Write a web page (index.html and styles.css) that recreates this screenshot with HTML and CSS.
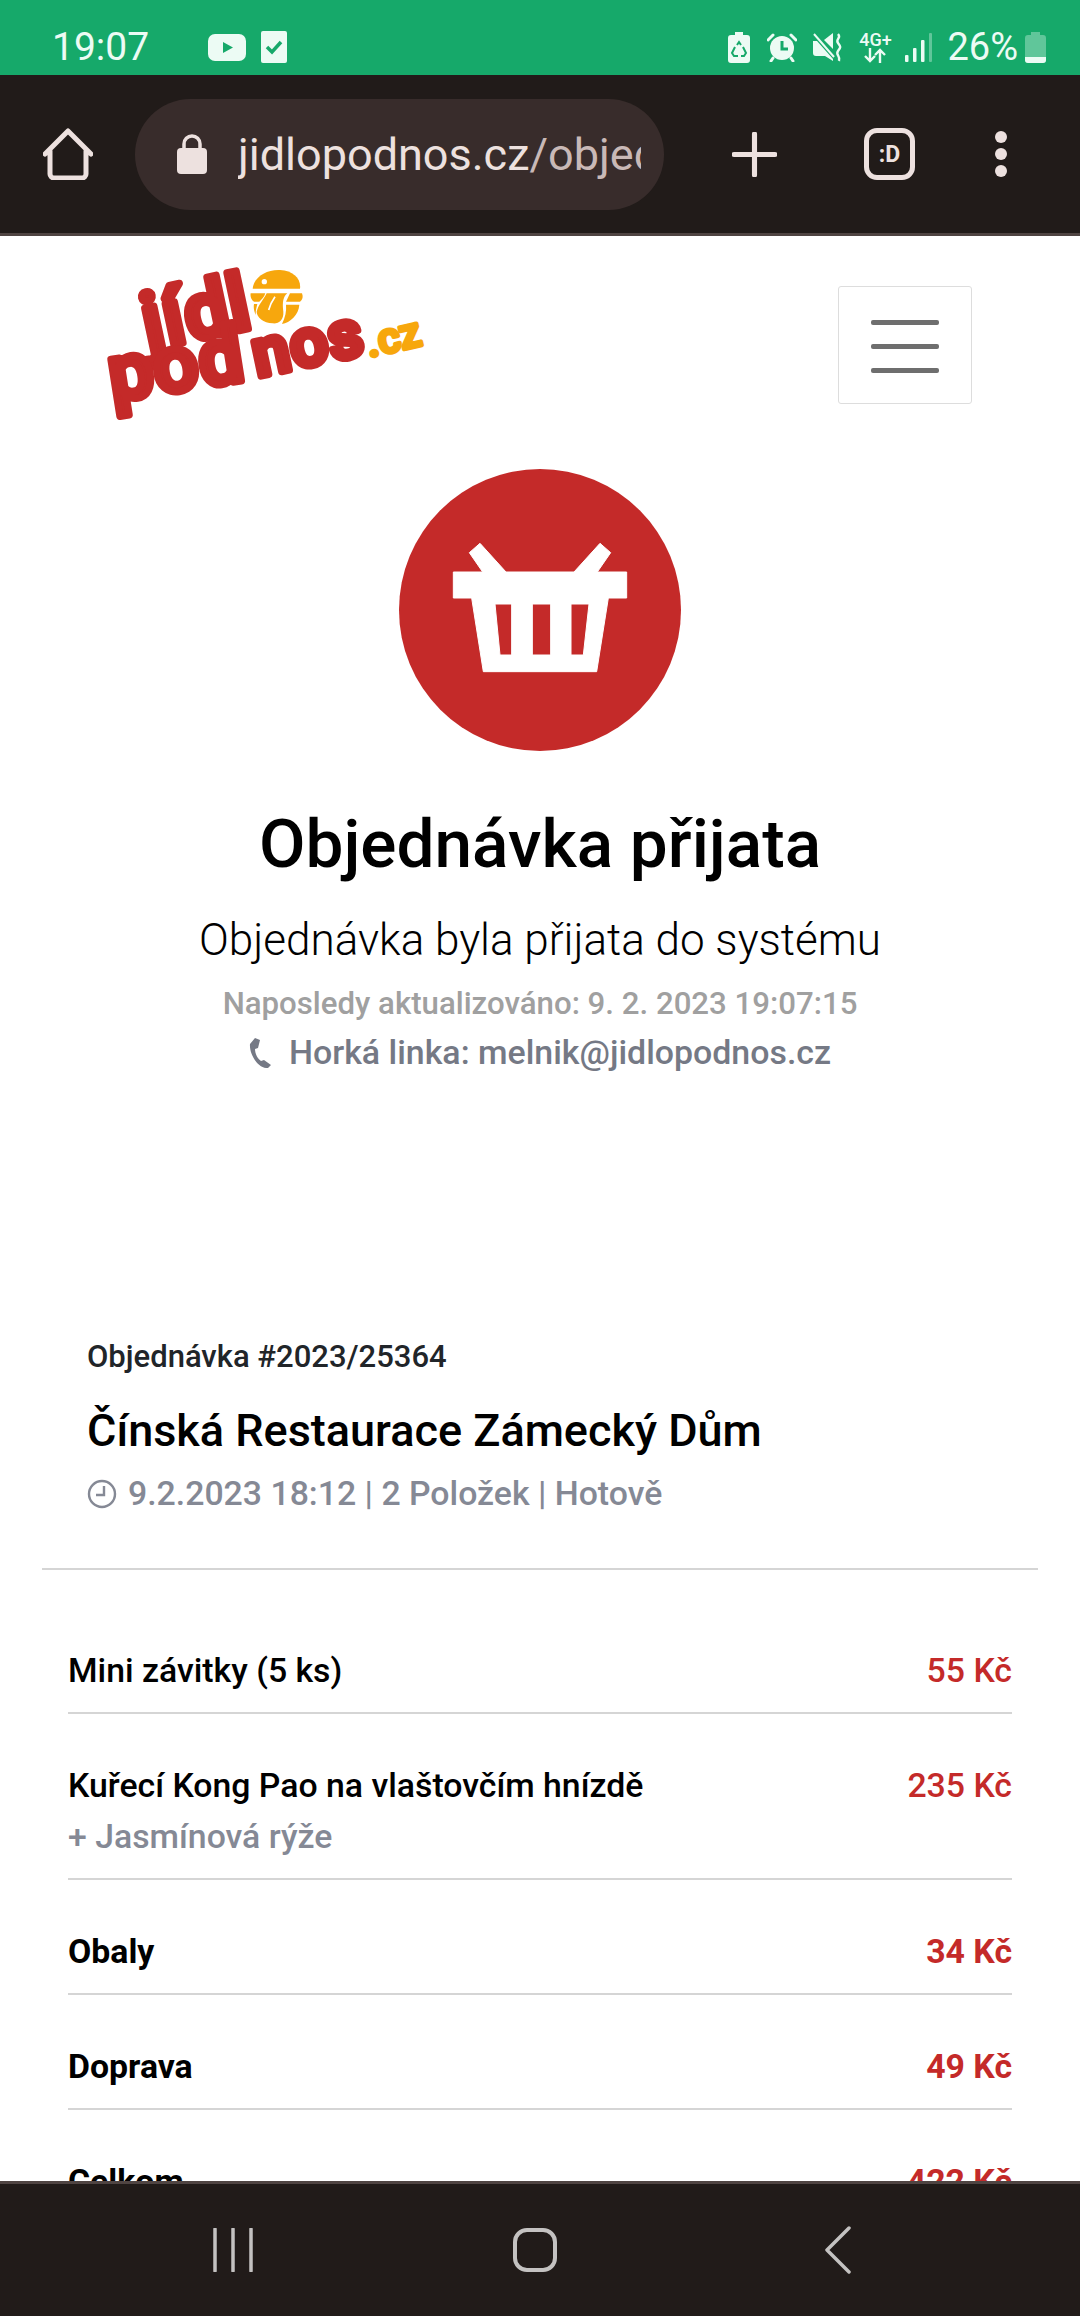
FILE: index.html
```html
<!DOCTYPE html>
<html lang="cs">
<head>
    <meta charset="UTF-8">
    <meta name="viewport" content="width=device-width, initial-scale=1.0">
    <title>Objednávka přijata</title>
    <link rel="stylesheet" href="styles.css">
</head>
<body>
<div class="phone">
    <div class="status-bar">
        <span class="clock">19:07</span>
        <svg class="ic-yt" viewBox="0 0 38 27"><rect width="38" height="27" rx="7" fill="#ecfbf4"/><path d="M15 8v11l10-5.500z" fill="#16a96a"/></svg>
        <svg class="ic-task" viewBox="0 0 26 32"><rect width="26" height="32" rx="2" fill="#ecfbf4"/><path d="M6 16l5 5 9-10" fill="none" stroke="#16a96a" stroke-width="3.500"/></svg>
        <span class="status-space"></span>
        <svg class="ic-recycle" viewBox="0 0 22 31"><path d="M7 0h8v3h4a3 3 0 0 1 3 3v22a3 3 0 0 1-3 3H3a3 3 0 0 1-3-3V6a3 3 0 0 1 3-3h4z" fill="#ecfbf4"/><path d="M9 13l2-3 2 3M7 15l-3 6 2 3h4M15 15l3 6-2 3h-3" fill="none" stroke="#16a96a" stroke-width="2"/></svg>
        <svg class="ic-alarm" viewBox="0 0 30 29"><path d="M1 7l5-5M29 7l-5-5" stroke="#ecfbf4" stroke-width="3" stroke-linecap="round"/><path d="M6 25l-2 3M24 25l2 3" stroke="#ecfbf4" stroke-width="3" stroke-linecap="round"/><circle cx="15" cy="15" r="12" fill="#ecfbf4"/><path d="M15 8v8h6" fill="none" stroke="#16a96a" stroke-width="3"/></svg>
        <svg class="ic-mute" viewBox="0 0 30 29"><path d="M0 8h4l16 18v2l-8-5H3a3 3 0 0 1-3-3z" fill="#ecfbf4"/><path d="M11 7l9-7v16z" fill="#ecfbf4"/><path d="M1 1l20 23" stroke="#ecfbf4" stroke-width="2"/><path d="M25 1c4 4-3 5 0 9s3 4 0 8 3 5 1 10" fill="none" stroke="#ecfbf4" stroke-width="2.400"/></svg>
        <span class="ic-net"><span class="net-text">4G+</span><svg viewBox="0 0 24 15"><path d="M7 0v13M2 8l5 5 5-5M17 15V2M12 7l5-5 5 5" fill="none" stroke="#ecfbf4" stroke-width="2.400"/></svg></span>
        <svg class="ic-signal" viewBox="0 0 27 29"><rect x="0" y="22" width="3.500" height="7" rx="1" fill="#ecfbf4"/><rect x="8" y="15" width="3.500" height="14" rx="1" fill="#ecfbf4"/><rect x="16" y="7" width="3.500" height="22" rx="1" fill="#ecfbf4"/><rect x="24" y="0" width="3" height="29" rx="1" fill="#ecfbf4" opacity=".35"/></svg>
        <span class="battery-text">26%</span>
        <svg class="ic-batt" viewBox="0 0 21 31"><path d="M6 0h9v3h3a3 3 0 0 1 3 3v22a3 3 0 0 1-3 3H3a3 3 0 0 1-3-3V6a3 3 0 0 1 3-3h3z" fill="#ecfbf4" opacity=".35"/><path d="M0 25h21v3a3 3 0 0 1-3 3H3a3 3 0 0 1-3-3z" fill="#ecfbf4"/></svg>
    </div>

    <div class="toolbar">
        <svg class="ic-home" viewBox="0 0 50 52"><path d="M2 26L25 3l23 23M7 23v23a4 4 0 0 0 4 4h28a4 4 0 0 0 4-4V23" fill="none" stroke="#ede1df" stroke-width="5" stroke-linecap="round" stroke-linejoin="round"/></svg>
        <div class="url-pill">
            <svg class="ic-lock" viewBox="0 0 30 40"><path d="M7 16V10a8 8 0 0 1 16 0v6" fill="none" stroke="#ede1df" stroke-width="3.500"/><rect y="14" width="30" height="26" rx="4" fill="#ede1df"/></svg>
            <div class="url-text">jidlopodnos.cz<span class="url-path">/objednavka/2023/25364</span></div>
        </div>
        <svg class="ic-plus" viewBox="0 0 44 44"><path d="M22 2v40M2 22h40" stroke="#ede1df" stroke-width="5" stroke-linecap="round"/></svg>
        <div class="tab-count">:D</div>
        <div class="dots"><i></i><i></i><i></i></div>
    </div>

    <div class="page">
        <header class="site-header">
            <svg class="logo" viewBox="0 0 1200 600">
                <g class="logo-red">
                    <text transform="translate(205 330) rotate(-12)" font-size="236" letter-spacing="3">jídl</text>
                    <text transform="translate(98 484) rotate(-9)" font-size="236" letter-spacing="3">pod</text>
                    <text transform="translate(532 410) rotate(-12)" font-size="198" letter-spacing="4">nos</text>
                </g>
                <text class="logo-orange" transform="translate(868 352) rotate(-13)" font-size="128">.cz</text>
                <!-- burger with tongue -->
                <g fill="#f7a70d">
                    <path d="M518 146C522 110 560 88 600 90 640 92 664 116 660 146z"/>
                    <path d="M512 160h44c-4 12-10 18-18 25h-16c-8-5-12-15-10-25z"/>
                    <path d="M630 160h36c4 10 2 20-6 25h-42z"/>
                    <path d="M522 192h10c-4 16-6 26-4 34-6-11-8-24-6-34z"/>
                    <path d="M618 194h40c-2 31-28 54-52 58 10-20 14-40 12-58z"/>
                    <path d="M560 160h62c-12 10-16 25-12 55 2 25-14 37-32 35-28 0-48-20-48-35 5-20 20-35 30-55z"/>
                </g>
                <circle cx="553" cy="125" r="8" fill="#fff"/>
                <path d="M585 170c-7 10-15 25-19 40" fill="none" stroke="#fff" stroke-width="5"/>
            </svg>
            <button class="menu-toggle"><i></i><i></i><i></i></button>
        </header>

        <section class="state">
            <svg class="state-icon" viewBox="0 0 960 960">
                <circle cx="480" cy="480" r="423" fill="#c42a29"/>
                <path fill="#fff" fill-rule="evenodd" stroke="#fff" stroke-width="3" stroke-linejoin="round" d="M268 308l32-28 78 86h204l78-86 32 28-40 58h88v78h-55l-35 221H310l-35-221h-55v-78h88zM345 462l15 153h35V462zM457 462v153h55V462zM573 462v153h37l17-153z"/>
            </svg>
            <h1>Objednávka přijata</h1>
            <p class="state-sub">Objednávka byla přijata do systému</p>
            <p class="state-time">Naposledy aktualizováno: 9. 2. 2023 19:07:15</p>
            <p class="state-hot">
                <svg class="ic-phone" viewBox="0 0 24 30"><path d="M6 0l5 2-2 8-3 1c0 5 3 10 6 12l3-1 7 5-3 3c-10 1-19-14-18-24z" fill="#757985"/></svg>
                Horká linka: melnik@jidlopodnos.cz
            </p>
        </section>

        <section class="order-head">
            <div class="order-no">Objednávka #2023/25364</div>
            <h2>Čínská Restaurace Zámecký Dům</h2>
            <div class="order-meta">
                <svg class="ic-clock" viewBox="0 0 30 30"><circle cx="15" cy="15" r="13" fill="none" stroke="#858995" stroke-width="2.400"/><path d="M17 7v9H9" fill="none" stroke="#858995" stroke-width="2.400"/></svg>
                9.2.2023 18:12 | 2 Položek | Hotově
            </div>
        </section>

        <section class="items">
            <div class="item">
                <div>Mini závitky (5 ks)</div>
                <div class="price">55 Kč</div>
            </div>
            <div class="item">
                <div>Kuřecí Kong Pao na vlaštovčím hnízdě<div class="addon">+ Jasmínová rýže</div></div>
                <div class="price">235 Kč</div>
            </div>
            <div class="item strong">
                <div>Obaly</div>
                <div class="price">34 Kč</div>
            </div>
            <div class="item strong">
                <div>Doprava</div>
                <div class="price">49 Kč</div>
            </div>
            <div class="item strong">
                <div>Celkom</div>
                <div class="price">422 Kč</div>
            </div>
        </section>
    </div>

    <div class="nav-bar">
        <svg class="ic-recents" viewBox="0 0 40 44"><path d="M2 1v42M20 1v42M38 1v42" stroke="#c4c2c1" stroke-width="3.500" stroke-linecap="round"/></svg>
        <svg class="ic-square" viewBox="0 0 44 44"><rect x="2" y="2" width="40" height="40" rx="12" fill="none" stroke="#c4c2c1" stroke-width="4"/></svg>
        <svg class="ic-back" viewBox="0 0 28 48"><path d="M25 2L3 24l22 22" fill="none" stroke="#c4c2c1" stroke-width="3.500" stroke-linecap="round" stroke-linejoin="round"/></svg>
    </div>
</div>
</body>
</html>
```

FILE: styles.css
```css
* {
    box-sizing: border-box;
}
html, body {
    margin: 0;
    padding: 0;
}
body {
    font-family: Roboto, "Noto Sans", sans-serif;
    color: #000;
    background: #fff;
}
svg {
    display: block;
    flex: none;
}
.phone {
    width: 1080px;
    height: 2316px;
    display: flex;
    flex-direction: column;
    overflow: hidden;
}

/* status bar */
.status-bar {
    height: 75px;
    flex: none;
    background: #16a96a;
    color: #ecfbf4;
    display: flex;
    align-items: center;
    padding: 19px 34px 0 52px;
}
.clock {
    font-size: 39px;
    width: 156px;
}
.ic-yt { width: 38px; height: 27px; }
.ic-task { width: 26px; height: 32px; margin-left: 15px; }
.status-space { flex: 1; }
.ic-recycle { width: 22px; height: 31px; }
.ic-alarm { width: 30px; height: 29px; margin-left: 17px; }
.ic-mute { width: 30px; height: 29px; margin-left: 16px; }
.ic-net {
    width: 34px;
    margin-left: 15px;
    display: flex;
    flex-direction: column;
    align-items: center;
}
.ic-net svg { width: 24px; height: 15px; }
.net-text {
    font-size: 18px;
    font-weight: 500;
    line-height: 17px;
}
.ic-signal { width: 27px; height: 29px; margin-left: 13px; }
.battery-text {
    font-size: 38px;
    margin-left: 15px;
}
.ic-batt { width: 21px; height: 31px; margin-left: 7px; }

/* browser toolbar */
.toolbar {
    height: 161px;
    flex: none;
    background: #211b19;
    border-bottom: 3px solid #4f4442;
    display: flex;
    align-items: center;
}
.ic-home { width: 50px; height: 52px; margin-left: 43px; }
.url-pill {
    width: 529px;
    height: 111px;
    margin-left: 42px;
    border-radius: 56px;
    background: #382c2b;
    display: flex;
    align-items: center;
    padding: 0 23px 0 42px;
}
.ic-lock { width: 30px; height: 40px; }
.url-text {
    margin-left: 31px;
    font-size: 45px;
    color: #ede1df;
    white-space: nowrap;
    overflow: hidden;
}
.url-path { color: #c9b9b7; }
.ic-plus { width: 45px; height: 45px; margin-left: 68px; }
.tab-count {
    width: 51px;
    height: 52px;
    margin-left: 87px;
    border: 5px solid #ede1df;
    border-radius: 13px;
    color: #ede1df;
    font-size: 23px;
    font-weight: 700;
    display: flex;
    align-items: center;
    justify-content: center;
}
.dots {
    margin-left: 80px;
    display: flex;
    flex-direction: column;
    gap: 5px;
}
.dots i {
    display: block;
    width: 12px;
    height: 12px;
    border-radius: 50%;
    background: #ede1df;
}

/* page */
.page {
    flex: 1;
    min-height: 0;
    overflow: hidden;
    background: #fff;
}
.site-header {
    height: 214px;
    display: flex;
    justify-content: space-between;
    padding: 0 108px 0 80px;
}
.logo {
    width: 400px;
    height: 200px;
    margin-top: 4px;
}
.logo-red text {
    font-family: Roboto, sans-serif;
    font-weight: 500;
    fill: #c42a29;
    stroke: #c42a29;
    stroke-width: 22;
    stroke-linejoin: round;
}
.logo-orange {
    font-family: Roboto, sans-serif;
    font-weight: 500;
    fill: #f7a70d;
    stroke: #f7a70d;
    stroke-width: 12;
    stroke-linejoin: round;
}
.menu-toggle {
    width: 134px;
    height: 118px;
    margin-top: 50px;
    background: #fff;
    border: 1px solid #ddd;
    border-radius: 3px;
    display: flex;
    flex-direction: column;
    align-items: center;
    justify-content: center;
    gap: 19px;
    padding: 3px 0 0;
}
.menu-toggle i {
    display: block;
    width: 68px;
    height: 5px;
    border-radius: 2px;
    background: #6e6e6e;
}

.state {
    display: flex;
    flex-direction: column;
    align-items: center;
    text-align: center;
}
.state-icon {
    width: 320px;
    height: 320px;
}
.state h1 {
    margin: 36px 0 0;
    font-size: 67.500px;
    font-weight: 500;
    line-height: 76px;
}
.state p {
    margin: 0;
}
.state .state-sub {
    margin-top: 30px;
    font-size: 44px;
    font-weight: 300;
    line-height: 56px;
}
.state .state-time {
    margin-top: 14px;
    font-size: 31.200px;
    font-weight: 500;
    line-height: 44px;
    color: #a0a0a0;
}
.state .state-hot {
    margin-top: 5px;
    font-size: 33.900px;
    font-weight: 500;
    line-height: 44px;
    color: #757985;
    display: flex;
    align-items: center;
    gap: 16px;
}
.ic-phone { width: 24px; height: 30px; }

.order-head {
    margin-top: 262px;
    padding: 0 87px;
    height: 231px;
}
.order-no {
    font-size: 31px;
    font-weight: 500;
    line-height: 40px;
    color: #212529;
}
.order-head h2 {
    margin: 24px 0 0;
    font-size: 45px;
    font-weight: 500;
    line-height: 60px;
}
.order-meta {
    margin-top: 11px;
    font-size: 33.800px;
    font-weight: 500;
    line-height: 44px;
    color: #858995;
    display: flex;
    align-items: center;
    gap: 11px;
}
.ic-clock { width: 30px; height: 30px; }

.items {
    margin: 0 42px;
    padding: 58px 26px 0;
    border-top: 2px solid #d5d5d5;
}
.item {
    display: flex;
    justify-content: space-between;
    padding: 50px 0 19px;
    border-bottom: 2px solid #d5d5d5;
    font-size: 33.800px;
    font-weight: 500;
    line-height: 44px;
}
.item:first-child {
    padding-top: 21px;
}
.addon {
    margin-top: 7px;
    color: #858995;
}
.price {
    color: #c42a29;
    white-space: nowrap;
}
.strong {
    font-weight: 700;
}

/* android nav */
.nav-bar {
    height: 135px;
    flex: none;
    background: #211b19;
    border-top: 3px solid #4f4442;
    display: flex;
    align-items: center;
    padding-left: 213px;
}
.ic-recents { width: 40px; height: 44px; }
.ic-square { width: 44px; height: 44px; margin-left: 260px; }
.ic-back { width: 28px; height: 48px; margin-left: 267px; }
```
